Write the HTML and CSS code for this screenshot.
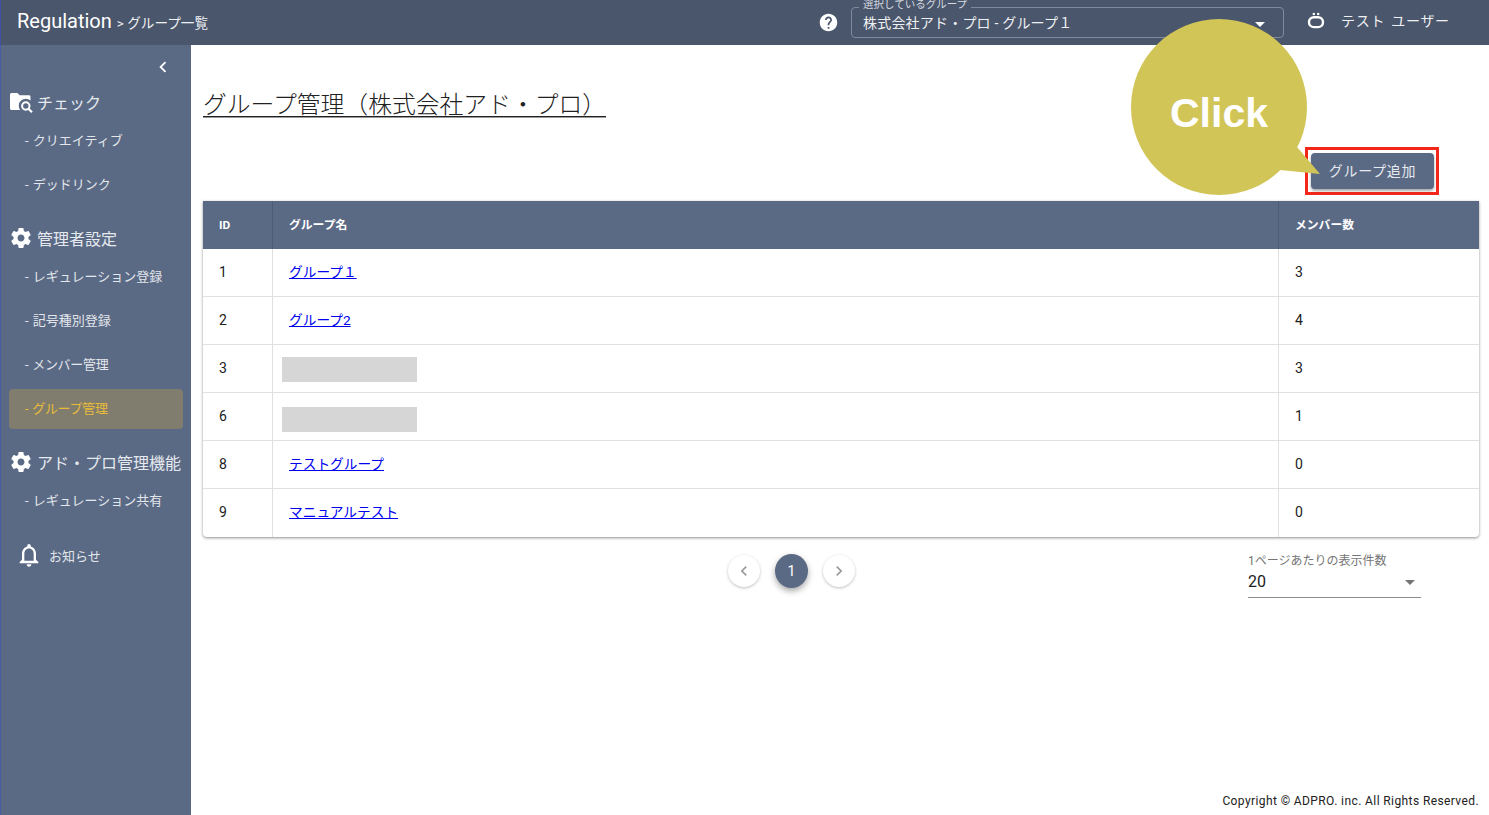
FILE: index.html
```html
<!DOCTYPE html>
<html lang="ja">
<head>
<meta charset="utf-8">
<title>Regulation</title>
<link rel="stylesheet" href="styles.css">
</head>
<body>
<header class="topbar">
  <div class="brand"><span class="brand-name">Regulation</span><span class="crumb">&gt; グループ一覧</span></div>
  <svg class="help" viewBox="0 0 24 24"><path fill="#fff" d="M12 2C6.48 2 2 6.48 2 12s4.48 10 10 10 10-4.48 10-10S17.52 2 12 2zm1 17h-2v-2h2v2zm2.07-7.75l-.9.92C13.45 12.9 13 13.5 13 15h-2v-.5c0-1.1.45-2.1 1.17-2.83l1.24-1.26c.37-.36.59-.86.59-1.41 0-1.1-.9-2-2-2s-2 .9-2 2H8c0-2.21 1.79-4 4-4s4 1.79 4 4c0 .88-.36 1.68-.93 2.25z"/></svg>
  <div class="group-select">
    <span class="group-legend">選択しているグループ</span>
    <span class="group-value">株式会社アド・プロ - グループ１</span>
    <span class="caret caret-white"></span>
  </div>
  <svg class="user-icon" viewBox="0 0 20 20"><circle cx="7.800" cy="3.100" r="1.250" fill="#fff"/><circle cx="12.200" cy="3.100" r="1.250" fill="#fff"/><rect x="3" y="6.200" width="14" height="9.900" rx="4.900" fill="none" stroke="#fff" stroke-width="2.400"/></svg>
  <span class="user-name">テスト ユーザー</span>
</header>
<div class="shell">
  <aside class="sidebar">
    <div class="collapse"><svg viewBox="0 0 24 24"><path fill="#fff" d="M15.4 7.4L14 6l-6 6 6 6 1.4-1.4L10.8 12z"/></svg></div>
    <div class="nav-head first">
      <svg class="nav-icon" viewBox="0 0 24 24"><path fill="#fff" d="M1 4.5C1 3.7 1.7 3 2.5 3h6l2.200 2.300h9.300c.8 0 1.500.7 1.500 1.500v3.800a7 7 0 0 0-10.300 9.400H2.500C1.700 20 1 19.300 1 18.500z"/><circle cx="16.800" cy="16" r="3.700" fill="none" stroke="#fff" stroke-width="2"/><path stroke="#fff" stroke-width="2.200" d="M19.500 18.800l3.500 3.500"/></svg>
      <span>チェック</span>
    </div>
    <a class="nav-item">- クリエイティブ</a>
    <a class="nav-item">- デッドリンク</a>
    <div class="nav-head">
      <svg class="nav-icon" viewBox="0 0 24 24"><path fill="#fff" d="M19.430 12.980c.04-.32.07-.64.07-.98s-.03-.66-.07-.98l2.110-1.650c.19-.15.24-.42.12-.64l-2-3.460c-.12-.22-.39-.3-.61-.22l-2.490 1c-.52-.4-1.080-.73-1.690-.98l-.38-2.650A.488.488 0 0 0 14 2h-4c-.25 0-.46.18-.49.42l-.38 2.650c-.61.25-1.170.59-1.690.98l-2.490-1c-.23-.09-.49 0-.61.22l-2 3.460c-.13.22-.07.49.12.64l2.110 1.650c-.04.32-.07.65-.07.98s.03.66.07.98l-2.110 1.650c-.19.15-.24.42-.12.64l2 3.460c.12.22.39.3.61.22l2.490-1c.52.4 1.080.73 1.690.98l.38 2.650c.03.24.24.42.49.42h4c.25 0 .46-.18.49-.42l.38-2.650c.61-.25 1.170-.59 1.690-.98l2.490 1c.23.09.49 0 .61-.22l2-3.460c.12-.22.07-.49-.12-.64l-2.110-1.650zM12 15.500c-1.930 0-3.500-1.570-3.500-3.500s1.570-3.500 3.500-3.500 3.500 1.570 3.500 3.500-1.570 3.500-3.500 3.500z"/></svg>
      <span>管理者設定</span>
    </div>
    <a class="nav-item">- レギュレーション登録</a>
    <a class="nav-item">- 記号種別登録</a>
    <a class="nav-item narrow">- メンバー管理</a>
    <a class="nav-item narrow active">- グループ管理</a>
    <div class="nav-head">
      <svg class="nav-icon" viewBox="0 0 24 24"><path fill="#fff" d="M19.430 12.980c.04-.32.07-.64.07-.98s-.03-.66-.07-.98l2.110-1.650c.19-.15.24-.42.12-.64l-2-3.460c-.12-.22-.39-.3-.61-.22l-2.490 1c-.52-.4-1.080-.73-1.690-.98l-.38-2.650A.488.488 0 0 0 14 2h-4c-.25 0-.46.18-.49.42l-.38 2.650c-.61.25-1.170.59-1.690.98l-2.490-1c-.23-.09-.49 0-.61.22l-2 3.460c-.13.22-.07.49.12.64l2.110 1.650c-.04.32-.07.65-.07.98s.03.66.07.98l-2.110 1.650c-.19.15-.24.42-.12.64l2 3.460c.12.22.39.3.61.22l2.490-1c.52.4 1.080.73 1.690.98l.38 2.650c.03.24.24.42.49.42h4c.25 0 .46-.18.49-.42l.38-2.650c.61-.25 1.170-.59 1.690-.98l2.490 1c.23.09.49 0 .61-.22l2-3.460c.12-.22.07-.49-.12-.64l-2.110-1.650zM12 15.500c-1.930 0-3.500-1.570-3.500-3.500s1.570-3.500 3.500-3.500 3.500 1.570 3.500 3.500-1.570 3.500-3.500 3.500z"/></svg>
      <span>アド・プロ管理機能</span>
    </div>
    <a class="nav-item">- レギュレーション共有</a>
    <div class="nav-notice">
      <svg class="bell" viewBox="0 0 24 24"><path fill="#fff" d="M12 22c1.100 0 2-.9 2-2h-4c0 1.100.9 2 2 2zm6-6v-5c0-3.070-1.630-5.640-4.500-6.320V4c0-.83-.67-1.500-1.500-1.500s-1.500.67-1.500 1.500v.68C7.640 5.360 6 7.920 6 11v5l-2 2v1h16v-1l-2-2zm-2 1H8v-6c0-2.480 1.510-4.500 4-4.500s4 2.020 4 4.500v6z"/></svg>
      <span>お知らせ</span>
    </div>
  </aside>
  <main class="content">
    <div class="title-row">
      <h1 class="page-title">グループ管理（株式会社アド・プロ）</h1>
    </div>
    <div class="action-row">
      <div class="highlight"><button class="add-btn">グループ追加</button></div>
    </div>
    <div class="callout">
      <svg class="callout-shape" viewBox="0 0 190 176"><ellipse cx="88" cy="88" rx="88" ry="88" fill="#d2c558"/><path fill="#d2c558" d="M166 128L189 155 149 151z"/></svg>
      <span class="callout-text">Click</span>
    </div>
    <table class="groups">
      <colgroup><col class="col-id"><col class="col-name"><col class="col-count"></colgroup>
      <thead><tr><th>ID</th><th>グループ名</th><th>メンバー数</th></tr></thead>
      <tbody>
        <tr><td>1</td><td><a href="#">グループ１</a></td><td>3</td></tr>
        <tr><td>2</td><td><a href="#">グループ2</a></td><td>4</td></tr>
        <tr><td>3</td><td class="masked"><div class="redact"></div></td><td>3</td></tr>
        <tr><td>6</td><td class="masked"><div class="redact low"></div></td><td>1</td></tr>
        <tr><td>8</td><td><a href="#">テストグループ</a></td><td>0</td></tr>
        <tr><td>9</td><td><a href="#">マニュアルテスト</a></td><td>0</td></tr>
      </tbody>
    </table>
    <div class="table-foot">
      <nav class="pager">
        <span class="page-btn"><svg viewBox="0 0 24 24"><path fill="#9a9a9a" d="M15.400 7.400L14 6l-6 6 6 6 1.400-1.400L10.800 12z"/></svg></span>
        <span class="page-btn current">1</span>
        <span class="page-btn"><svg viewBox="0 0 24 24"><path fill="#9a9a9a" d="M10 6L8.600 7.400 13.200 12l-4.600 4.600L10 18l6-6z"/></svg></span>
      </nav>
      <div class="per-page">
        <span class="per-label">1ページあたりの表示件数</span>
        <div class="per-value"><span>20</span><span class="caret caret-gray"></span></div>
      </div>
    </div>
    <footer class="copy">Copyright © ADPRO. inc. All Rights Reserved.</footer>
  </main>
</div>
</body>
</html>
```
FILE: styles.css
```css
* { box-sizing: border-box; }
html, body { margin: 0; height: 100%; }
body {
  width: 1489px;
  height: 815px;
  overflow: hidden;
  display: flex;
  flex-direction: column;
  background: #fff;
  color: #212121;
  font-family: Roboto, "Noto Sans CJK JP", sans-serif;
}
.topbar {
  height: 45px;
  flex: none;
  display: flex;
  align-items: center;
  background: #4a566b;
  border-left: 1px solid #3f51a5;
  color: #fff;
  padding-left: 16px;
}
.brand { display: flex; align-items: baseline; width: 803px; padding-bottom: 4px; }
.brand-name { font-size: 20px; }
.crumb { font-size: 13.6px; margin-left: 5px; color: #eef0f3; }
.help { width: 21px; height: 21px; flex: none; margin-right: 12px; margin-left: -2px; }
.group-select {
  position: relative;
  width: 433px;
  height: 31px;
  flex: none;
  border: 1px solid #7f8a9c;
  border-radius: 4px;
  display: flex;
  align-items: center;
  padding-left: 11px;
  padding-bottom: 2px;
}
.group-legend {
  position: absolute;
  left: 7px;
  top: -10px;
  padding: 0 4px;
  font-size: 10.5px;
  line-height: 14px;
  color: #d5d9e0;
  background: #4a566b;
}
.group-value { font-size: 14px; letter-spacing: .2px; color: #eef0f3; }
.caret { width: 0; height: 0; border-left: 5px solid transparent; border-right: 5px solid transparent; }
.caret-white { position: absolute; right: 18px; top: 14px; border-top: 5px solid #fff; }
.caret-gray { border-top: 5px solid #757575; margin-right: 6px; }
.user-icon { width: 20px; height: 20px; flex: none; margin-left: 22px; margin-bottom: 3px; }
.user-name { font-size: 14px; margin-left: 15px; margin-bottom: 5px; letter-spacing: .7px; color: #eef0f3; word-spacing: 2px; }
.shell { flex: 1; display: flex; min-height: 0; }
.sidebar {
  width: 191px;
  flex: none;
  background: #5a6a85;
  border-left: 1px solid #4a5ba8;
  display: flex;
  flex-direction: column;
  color: #e6e9ee;
}
.collapse { height: 43px; display: flex; justify-content: flex-end; align-items: flex-start; padding: 11px 17px 0 0; }
.collapse svg { width: 22px; height: 22px; }
.nav-head {
  height: 30px;
  margin-top: 18px;
  display: flex;
  align-items: center;
  padding-left: 8px;
  padding-bottom: 2px;
  font-size: 16px;
}
.nav-head.first { margin-top: 0; }
.nav-icon { width: 24px; height: 24px; flex: none; margin-right: 4px; margin-top: -1px; }
.nav-item {
  display: flex;
  align-items: center;
  height: 40px;
  margin: 2px 8px;
  padding-left: 16px;
  padding-bottom: 2px;
  border-radius: 4px;
  font-size: 13px;
  word-spacing: 1px;
  color: #e3e6eb;
}
.nav-item.narrow { letter-spacing: -.3px; }
.nav-item.active {
  margin-top: 3px;
  margin-bottom: 1px;
  padding-bottom: 4px;
  background: #807d6e;
  color: #e8bb3a;
}
.nav-notice {
  display: flex;
  align-items: center;
  height: 30px;
  margin-top: 19px;
  padding-left: 14px;
  padding-bottom: 2px;
  font-size: 13px;
  color: #e3e6eb;
}
.bell { width: 28px; height: 28px; flex: none; margin-right: 6px; }
.content {
  position: relative;
  flex: 1;
  min-width: 0;
  padding: 0 10px 0 12px;
  display: flex;
  flex-direction: column;
}
.title-row { height: 73px; padding-top: 47px; }
.page-title {
  display: inline-block;
  margin: 0;
  padding-top: 2px;
  font-size: 23.8px;
  font-weight: 300;
  line-height: 22px;
  color: #212121;
  border-bottom: 1px solid #212121;
  box-shadow: 0 1px 0 #9a9a9a;
}
.action-row { height: 83px; display: flex; justify-content: flex-end; padding-top: 29px; padding-right: 40px; }
.highlight {
  width: 134px;
  height: 48px;
  border: 3px solid #f3281a;
  padding: 3px 2px 3px 3px;
}
.add-btn {
  width: 100%;
  height: 36px;
  border: none;
  border-radius: 4px;
  padding: 0 0 2px;
  background: #5a6a85;
  color: #e6e9ee;
  font: 14px Roboto, "Noto Sans CJK JP", sans-serif;
  letter-spacing: .7px;
  box-shadow: 0 2px 3px rgba(0,0,0,.35);
}
.callout { position: absolute; left: 940px; top: -26px; width: 190px; height: 176px; }
.callout-shape { display: block; width: 190px; height: 176px; }
.callout-text {
  position: absolute;
  left: 0;
  width: 176px;
  top: 69px;
  text-align: center;
  font: bold 41px/50px "Liberation Sans", Arial, sans-serif;
  color: #fff;
}
.groups {
  width: 1276px;
  table-layout: fixed;
  border-collapse: separate;
  border-spacing: 0;
  border-radius: 0 0 4px 4px;
  box-shadow: 0 1px 3px rgba(0,0,0,.45);
  font-size: 14px;
}
.col-id { width: 70px; }
.col-count { width: 200px; }
.groups th, .groups td { height: 48px; padding: 0 16px 2px; text-align: left; }
.groups th {
  padding-bottom: 3px;
  background: #5a6a85;
  color: #fff;
  font-size: 11.8px;
  font-weight: 700;
  border-right: 1px solid #4d5c76;
}
.groups th:first-child { padding-bottom: 1px; }
.groups th:last-child, .groups td:last-child { border-right: none; }
.groups td { border-right: 1px solid #e0e0e0; border-bottom: 1px solid #e0e0e0; color: #212121; }
.groups td:nth-child(2) { padding-bottom: 4px; }
.groups tbody tr:last-child td { border-bottom: none; }
.groups a { color: #0000ee; text-decoration: underline; font-size: 13.7px; }
.groups td.masked { padding: 0 16px 0 9px; }
.redact { width: 135px; height: 25px; margin-top: 1px; background: #d6d6d6; }
.redact.low { margin-top: 5px; }
.table-foot { position: relative; display: flex; height: 70px; }
.pager { display: flex; align-items: center; gap: 15px; margin: 17px 0 0 525px; height: 34px; }
.page-btn {
  width: 32px;
  height: 32px;
  border-radius: 50%;
  display: flex;
  align-items: center;
  justify-content: center;
  background: #fff;
  box-shadow: 0 1px 3px rgba(0,0,0,.25);
}
.page-btn svg { width: 20px; height: 20px; }
.page-btn.current {
  width: 33px;
  height: 34px;
  background: #5a6a85;
  color: #fff;
  font-size: 14px;
  box-shadow: 0 3px 6px rgba(0,0,0,.35);
}
.per-page {
  position: absolute;
  left: 1045px;
  top: 16px;
  width: 173px;
  height: 45px;
  border-bottom: 1px solid #8c8c8c;
}
.per-label { display: block; font-size: 12px; line-height: 16px; color: #757575; }
.per-value { display: flex; justify-content: space-between; align-items: center; font-size: 16px; line-height: 26px; }
.copy {
  margin-top: auto;
  padding-bottom: 7px;
  text-align: right;
  font-size: 12px;
  letter-spacing: .4px;
  line-height: 14px;
  color: #212121;
}
```
